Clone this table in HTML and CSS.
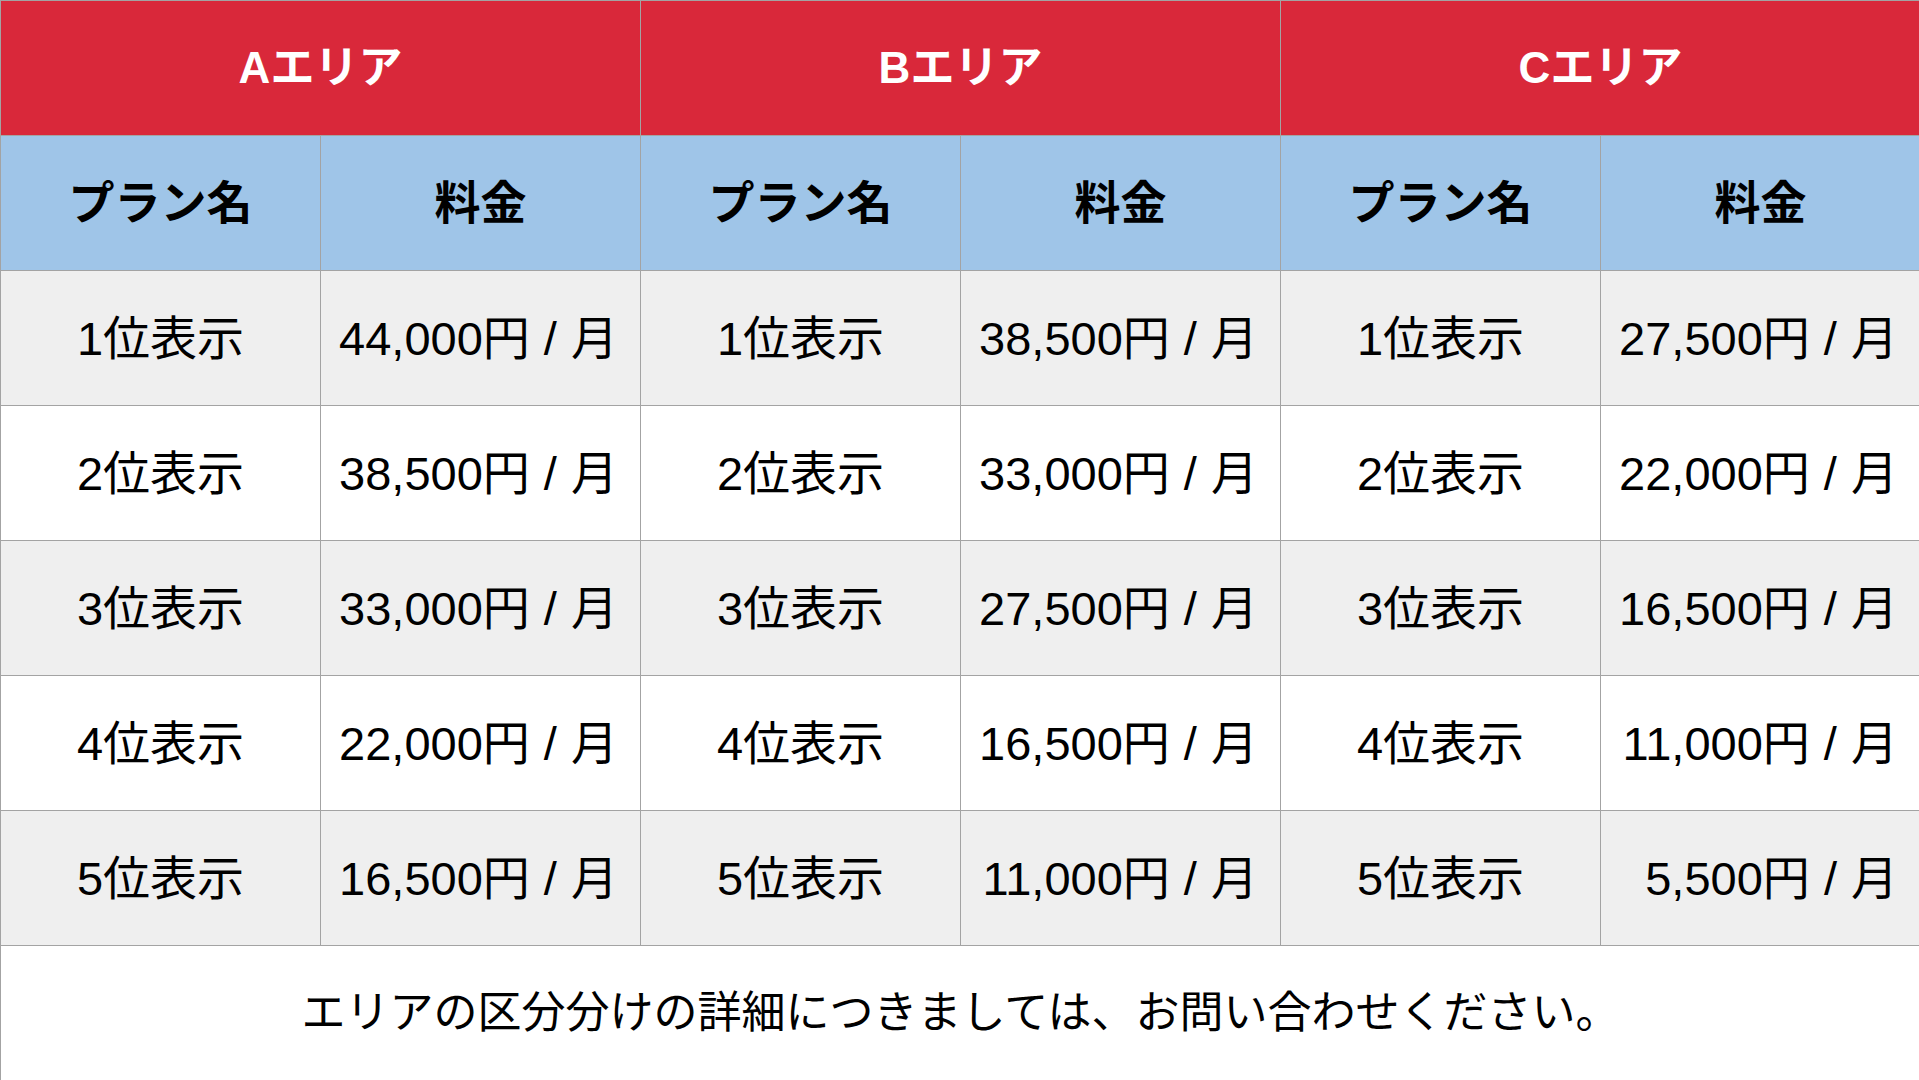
FILE: index.html
```html
<!DOCTYPE html>
<html lang="ja">
<head>
<meta charset="utf-8">
<link rel="stylesheet" href="styles.css">
</head>
<body>
<table class="price-table">
  <colgroup>
    <col><col><col><col><col><col>
  </colgroup>
  <thead>
    <tr class="area-row">
      <th colspan="2">Aエリア</th>
      <th colspan="2">Bエリア</th>
      <th colspan="2">Cエリア</th>
    </tr>
    <tr class="label-row">
      <th>プラン名</th><th>料金</th>
      <th>プラン名</th><th>料金</th>
      <th>プラン名</th><th>料金</th>
    </tr>
  </thead>
  <tbody>
    <tr class="odd">
      <td class="plan">1位表示</td><td class="price">44,000円 / 月</td>
      <td class="plan">1位表示</td><td class="price">38,500円 / 月</td>
      <td class="plan">1位表示</td><td class="price">27,500円 / 月</td>
    </tr>
    <tr class="even">
      <td class="plan">2位表示</td><td class="price">38,500円 / 月</td>
      <td class="plan">2位表示</td><td class="price">33,000円 / 月</td>
      <td class="plan">2位表示</td><td class="price">22,000円 / 月</td>
    </tr>
    <tr class="odd">
      <td class="plan">3位表示</td><td class="price">33,000円 / 月</td>
      <td class="plan">3位表示</td><td class="price">27,500円 / 月</td>
      <td class="plan">3位表示</td><td class="price">16,500円 / 月</td>
    </tr>
    <tr class="even">
      <td class="plan">4位表示</td><td class="price">22,000円 / 月</td>
      <td class="plan">4位表示</td><td class="price">16,500円 / 月</td>
      <td class="plan">4位表示</td><td class="price">11,000円 / 月</td>
    </tr>
    <tr class="odd">
      <td class="plan">5位表示</td><td class="price">16,500円 / 月</td>
      <td class="plan">5位表示</td><td class="price">11,000円 / 月</td>
      <td class="plan">5位表示</td><td class="price">5,500円 / 月</td>
    </tr>
    <tr class="note-row">
      <td colspan="6">エリアの区分分けの詳細につきましては、お問い合わせください。</td>
    </tr>
  </tbody>
</table>
</body>
</html>
```

FILE: styles.css
```css
html, body {
  margin: 0;
  padding: 0;
  background: #ffffff;
}

body {
  width: 1919px;
  height: 1080px;
  overflow: hidden;
  font-family: "Liberation Sans", "Noto Sans CJK JP", Arial, sans-serif;
  color: #000000;
}

.price-table {
  width: 1919px;
  height: 1080px;
  border-collapse: collapse;
  table-layout: fixed;
}

.price-table col {
  width: 320px;
}

.price-table th,
.price-table td {
  height: 134px;
  padding: 0;
  border: 1px solid #a3a3a3;
  text-align: center;
  vertical-align: middle;
  font-size: 47px;
  line-height: 1;
  white-space: nowrap;
}

.area-row th {
  background: #d9283a;
  color: #ffffff;
  font-weight: 700;
  font-size: 44px;
}

.label-row th {
  background: #9fc5e8;
  color: #000000;
  font-weight: 700;
  font-size: 46px;
}

.odd td {
  background: #efefef;
}

.even td {
  background: #ffffff;
}

.price-table td.price {
  text-align: right;
  padding-right: 22px;
  word-spacing: 1px;
}

.note-row td {
  background: #ffffff;
  font-size: 44px;
  border-bottom: none;
}
```
